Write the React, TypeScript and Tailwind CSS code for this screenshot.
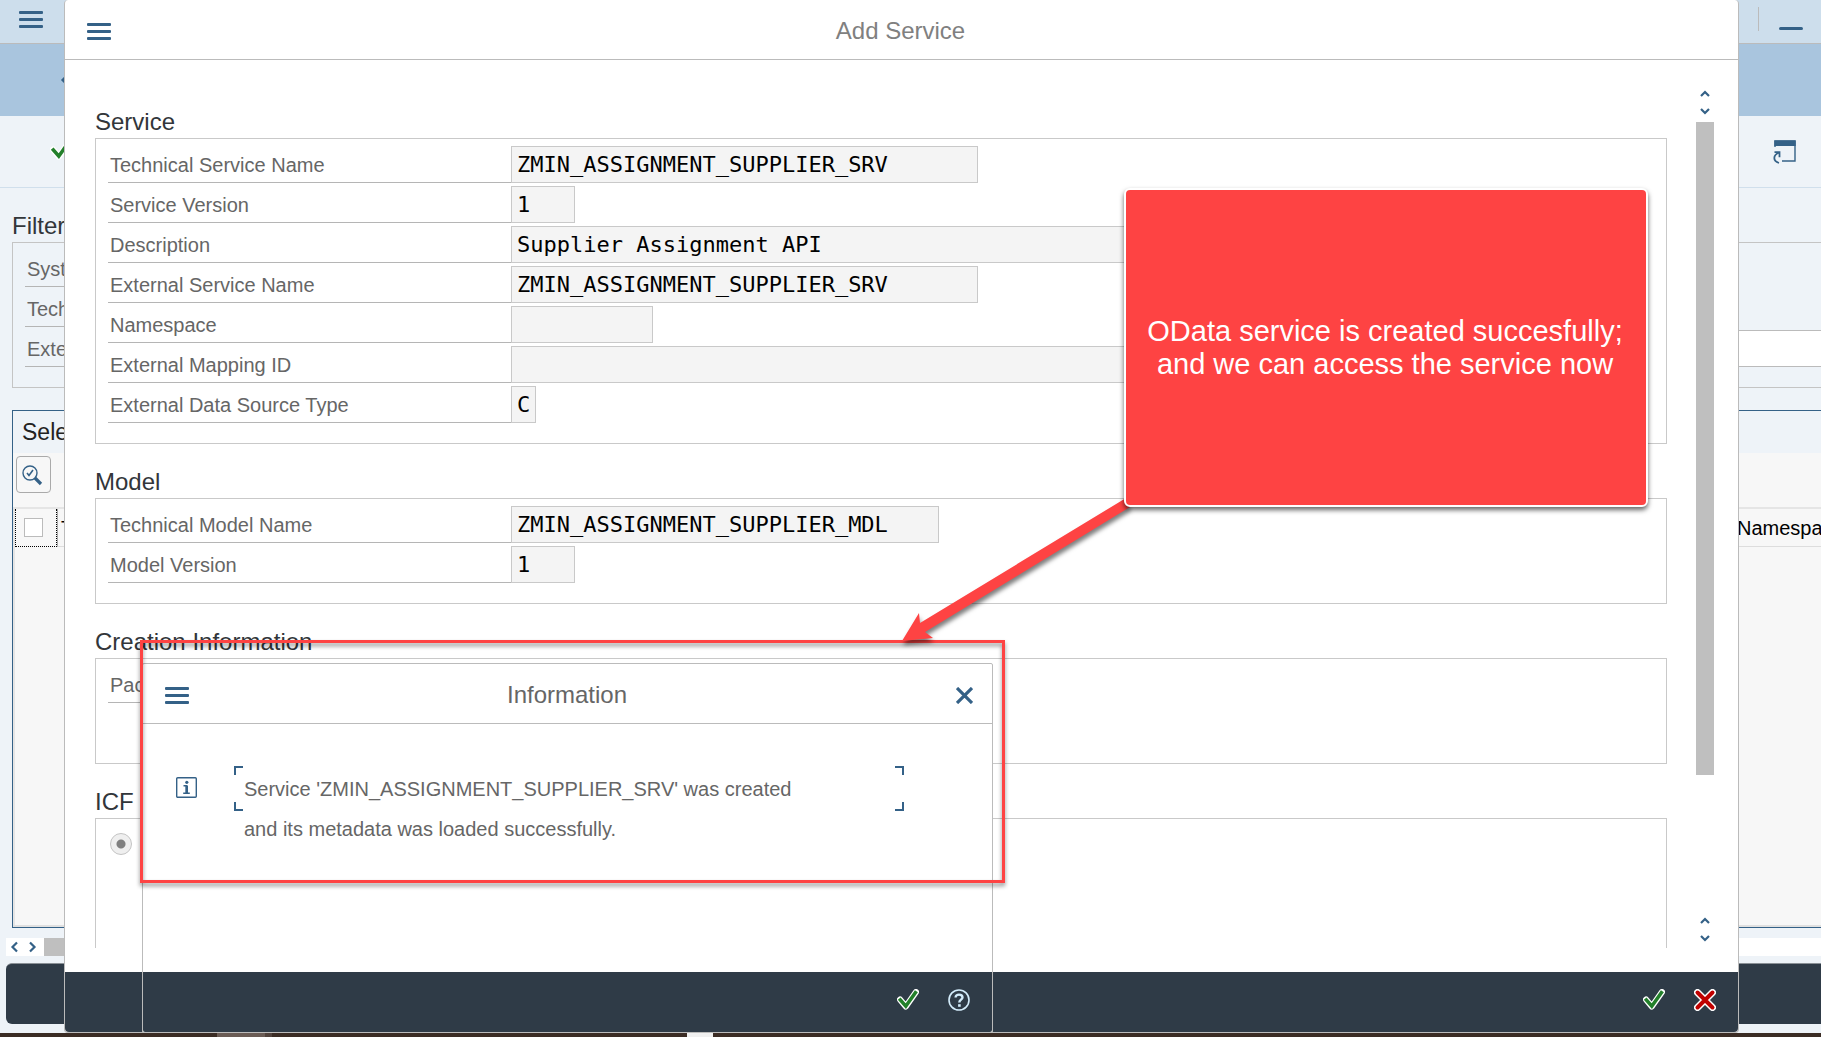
import React from "react";

type FieldSpec = { id: string; label: string; value?: string; width: string };

const serviceFields: FieldSpec[] = [
  { id: "tech-name", label: "Technical Service Name", value: "ZMIN_ASSIGNMENT_SUPPLIER_SRV", width: "w-[467px]" },
  { id: "version", label: "Service Version", value: "1", width: "w-16" },
  { id: "description", label: "Description", value: "Supplier Assignment API", width: "w-[800px]" },
  { id: "ext-name", label: "External Service Name", value: "ZMIN_ASSIGNMENT_SUPPLIER_SRV", width: "w-[467px]" },
  { id: "namespace", label: "Namespace", value: "", width: "w-[142px]" },
  { id: "mapping", label: "External Mapping ID", value: "", width: "w-[800px]" },
  { id: "source-type", label: "External Data Source Type", value: "C", width: "w-[25px]" },
];

const modelFields: FieldSpec[] = [
  { id: "model-name", label: "Technical Model Name", value: "ZMIN_ASSIGNMENT_SUPPLIER_MDL", width: "w-[428px]" },
  { id: "model-version", label: "Model Version", value: "1", width: "w-16" },
];

function MenuIcon() {
  return (
    <svg width="24" height="18" viewBox="0 0 24 18" fill="#346187" aria-hidden="true">
      <rect x="0" y="0" width="24" height="3" rx="1" />
      <rect x="0" y="7" width="24" height="3" rx="1" />
      <rect x="0" y="14" width="24" height="3" rx="1" />
    </svg>
  );
}

function CheckIcon() {
  return (
    <svg width="22" height="22" viewBox="0 0 22 22" fill="none" aria-hidden="true">
      <path d="M3 10.5 8.8 17.5 19 3" stroke="#fff" strokeWidth="6" strokeLinecap="round" strokeLinejoin="round" />
      <path d="M2.2 9.6 8.8 17.2 19.4 2.2" stroke="#23802b" strokeWidth="3.6" />
    </svg>
  );
}

function CancelIcon() {
  return (
    <svg width="22" height="22" viewBox="0 0 22 22" fill="none" aria-hidden="true">
      <path d="M3.5 3.5 18.5 18.5M18.5 3.5 3.5 18.5" stroke="#fff" strokeWidth="7" strokeLinecap="round" />
      <path d="M3.5 3.5 18.5 18.5M18.5 3.5 3.5 18.5" stroke="#c00000" strokeWidth="4" strokeLinecap="round" />
    </svg>
  );
}

function HelpIcon() {
  return (
    <svg width="22" height="22" viewBox="0 0 22 22" fill="none" stroke="#d3ecfb" strokeWidth="2" aria-hidden="true">
      <circle cx="11" cy="11" r="10" strokeWidth="1.6" />
      <path d="M7.6 8.6C7.6 6.6 9 5.6 11 5.6s3.5 1 3.5 2.8c0 2.2-3.2 2.4-3.2 5" strokeWidth="2.4" />
      <path d="M10.1 16.5h2.6" strokeWidth="2.6" />
    </svg>
  );
}

function Chevron({ dir }: { dir: "up" | "down" | "left" | "right" }) {
  const paths = {
    up: "M2 8 6 4 10 8",
    down: "M2 4 6 8 10 4",
    left: "M8 1.5 3.5 6 8 10.5",
    right: "M4 1.5 8.5 6 4 10.5",
  };
  return (
    <svg width="12" height="12" viewBox="0 0 12 12" fill="none" stroke="#346187" strokeWidth="2.2" aria-hidden="true">
      <path d={paths[dir]} />
    </svg>
  );
}

function Label({ htmlFor, children }: { htmlFor: string; children: React.ReactNode }) {
  return (
    <label
      htmlFor={htmlFor}
      className="flex w-[403px] shrink-0 items-center whitespace-nowrap border-b border-[#b5b5b5] pl-0.5 pt-0.5 text-[#666]"
    >
      {children}
    </label>
  );
}

function FieldRow({ field }: { field: FieldSpec }) {
  return (
    <div className="mb-[3px] flex h-[37px]">
      <Label htmlFor={field.id}>{field.label}</Label>
      {field.value !== undefined && (
        <input
          id={field.id}
          readOnly
          defaultValue={field.value}
          className={`border border-[#c9c9c9] bg-[#f4f4f4] pl-[5px] pt-px font-['DejaVu_Sans_Mono',monospace] text-[22px] text-black outline-none ${field.width}`}
        />
      )}
    </div>
  );
}

function Group({ title, open, children }: { title: string; open?: boolean; children: React.ReactNode }) {
  return (
    <section className={open ? "flex flex-1 flex-col" : "mb-5"}>
      <h2 className="h-[34px] text-2xl leading-[36px] text-[#32363a]">{title}</h2>
      <div
        className={
          open
            ? "flex-1 border border-b-0 border-[#c9c9c9] pl-3 pt-[7px]"
            : "border border-[#c9c9c9] pb-[17px] pl-3 pt-[7px]"
        }
      >
        {children}
      </div>
    </section>
  );
}

function Backdrop() {
  return (
    <div className="flex min-h-screen flex-col bg-[#eef3f8]">
      <header className="flex h-11 items-center justify-between border-b border-[#bbb] bg-[#cddeec] pl-[19px] pr-[18px]">
        <button aria-label="Menu" className="mb-1">
          <MenuIcon />
        </button>
        <div className="mb-[5px] flex h-6 items-end border-l border-[#bbb] pb-px pl-5">
          <button aria-label="Minimize" className="h-[3px] w-6 rounded-sm bg-[#346187]" />
        </div>
      </header>
      <div className="flex h-[72px] items-center bg-[#a9c5de] pl-[59px]">
        <button aria-label="Back">
          <Chevron dir="left" />
        </button>
      </div>
      <div className="flex h-[72px] items-center justify-between border-b border-[#d0dfec] pl-[50px] pr-6">
        <button aria-label="Continue" className="mb-1">
          <CheckIcon />
        </button>
        <button aria-label="New window">
          <svg width="24" height="24" viewBox="0 0 24 24" fill="none" aria-hidden="true">
            <path d="M2 7V1h20v20H9" stroke="#346187" strokeWidth="1.4" />
            <path d="M1.300 0.500H22.700v5.500H1.300z" fill="#346187" />
            <path d="M6 23C-.5 21 0 15 6 12.500M1.500 12.200h5v5" stroke="#346187" strokeWidth="1.800" />
          </svg>
        </button>
      </div>

      <section className="pl-3 pt-5">
        <h2 className="h-[34px] text-2xl leading-[36px] text-[#32363a]">Filter</h2>
        <div className="border border-r-0 border-[#c4c4c4] pb-[17px] pl-3 pt-[7px]">
          <div className="mb-[3px] flex h-[37px]">
            <Label htmlFor="alias">System</Label>
          </div>
          <div className="mb-[3px] flex h-[37px]">
            <Label htmlFor="filter-name">Tech.</Label>
          </div>
          <div className="mb-[3px] flex h-[37px]">
            <Label htmlFor="filter-ext">Extern</Label>
            <input id="filter-ext" className="min-w-0 flex-1 border-y border-[#bbb] bg-white outline-none" />
          </div>
        </div>
      </section>

      <section className="ml-3 mt-[22px] flex flex-1 flex-col border border-r-0 border-[#346187]">
        <h2 className="h-[42px] pl-[9px] text-[23px] leading-[42px] text-[#222]">Select</h2>
        <div className="flex flex-1 flex-col border-b-2 border-[#e0e0e0] bg-[#f7f7f7]">
          <div className="h-14 border-b-2 border-[#e5e5e5] pl-[3px] pt-[3px]">
            <button
              aria-label="Details"
              className="flex h-[37px] w-[35px] items-center justify-center rounded-sm border border-[#aaa] pr-1"
            >
              <svg width="22" height="22" viewBox="0 0 22 22" fill="none" stroke="#346187" aria-hidden="true">
                <circle cx="9" cy="9" r="7" strokeWidth="1.4" />
                <path d="m6 9 2 2.500L12 6" strokeWidth="1.600" />
                <path d="m14 14 6 6" strokeWidth="3.200" />
              </svg>
            </button>
          </div>
          <div className="flex flex-1 items-start border-l-2 border-[#e5e5e5]">
            <div className="flex h-[38px] w-[42px] shrink-0 items-center justify-center border border-t-0 border-dotted border-black pr-1.5">
              <input
                type="checkbox"
                aria-label="Select all"
                className="size-[19px] appearance-none border border-[#bbb] bg-white"
              />
            </div>
            <table className="h-[38px] w-full border-separate border-spacing-0 text-black">
              <thead>
                <tr>
                  <th className="border-b border-l border-b-[#ddd] border-l-[#aaa] p-0 pl-[3px] text-left font-normal">
                    T
                  </th>
                  <th className="w-[84px] border-b border-[#ddd] p-0 text-left font-normal">
                    <div className="w-[84px] overflow-hidden">Namespace</div>
                  </th>
                </tr>
              </thead>
            </table>
          </div>
        </div>
      </section>

      <div className="ml-1.5 mt-2.5 flex h-[18px] items-center bg-white">
        <button aria-label="Scroll left" className="ml-[3px] w-[17px]">
          <Chevron dir="left" />
        </button>
        <button aria-label="Scroll right" className="w-[18px]">
          <Chevron dir="right" />
        </button>
        <div className="h-full w-1/2 bg-[#bfbfbf]" />
      </div>
      <div className="mb-[9px] ml-1.5 mt-[7px] h-[61px] rounded-l-md border-t border-[#8a9096] bg-[#2f3b47]" />
      <div className="flex h-1 bg-[#3b2c24]">
        <div className="ml-[217px] w-12 bg-[#6b5c55]" />
        <div className="w-[7px] bg-[#51423c]" />
        <div className="ml-[415px] w-[26px] bg-[#f0f0f0]" />
      </div>
    </div>
  );
}

function AddServiceDialog() {
  return (
    <div
      role="dialog"
      aria-label="Add Service"
      className="absolute bottom-1 left-16 right-[82px] top-0 flex flex-col rounded-sm border border-t-0 border-[#bbb] bg-white"
    >
      <header className="flex h-[60px] shrink-0 items-center border-b border-[#bbb] px-[22px]">
        <button aria-label="Menu" className="mt-1">
          <MenuIcon />
        </button>
        <h1 className="flex-1 pr-[26px] pt-0.5 text-center text-2xl text-[#808080]">Add Service</h1>
      </header>
      <div className="flex min-h-0 flex-1 pb-6 pl-[30px] pr-6">
        <div className="flex min-h-0 min-w-0 flex-1 flex-col overflow-hidden pt-11">
          <Group title="Service">
            {serviceFields.map((f) => (
              <FieldRow key={f.id} field={f} />
            ))}
          </Group>
          <Group title="Model">
            {modelFields.map((f) => (
              <FieldRow key={f.id} field={f} />
            ))}
          </Group>
          <Group title="Creation Information">
            <FieldRow field={{ id: "package", label: "Package", width: "" }} />
            <div className="h-10" />
          </Group>
          <Group title="ICF Node" open>
            <div className="flex h-[36px] items-center pl-0.5">
              <input
                type="radio"
                defaultChecked
                aria-label="Standard Mode"
                className="size-[22px] appearance-none rounded-full border border-[#c4c4c4] bg-[#efefef] bg-[radial-gradient(circle,#808080_0_4px,transparent_5px)]"
              />
            </div>
          </Group>
        </div>
        <div className="ml-[29px] flex w-[18px] flex-col items-center">
          <button aria-label="Scroll up" className="mt-[25px] h-[17px]">
            <Chevron dir="up" />
          </button>
          <button aria-label="Scroll down" className="mb-0.5 h-[18px]">
            <Chevron dir="down" />
          </button>
          <div className="w-full flex-1 bg-[#bfbfbf]" />
          <button aria-label="Page up" className="mt-[137px] h-[17px]">
            <Chevron dir="up" />
          </button>
          <button aria-label="Page down" className="mb-0.5 h-[17px]">
            <Chevron dir="down" />
          </button>
        </div>
      </div>
      <footer className="flex h-[60px] shrink-0 items-center justify-end gap-[29px] rounded-b-sm bg-[#2f3b47] pb-[5px] pr-[22px]">
        <button aria-label="OK">
          <CheckIcon />
        </button>
        <button aria-label="Cancel">
          <CancelIcon />
        </button>
      </footer>
    </div>
  );
}

function InformationDialog() {
  return (
    <div
      role="dialog"
      aria-label="Information"
      className="absolute bottom-1 left-[142px] top-[663px] flex w-[851px] flex-col rounded-xs border border-[#bbb] bg-white"
    >
      <header className="flex h-[60px] shrink-0 items-center border-b border-[#bbb] pl-[22px] pr-[19px]">
        <button aria-label="Menu" className="mt-1">
          <MenuIcon />
        </button>
        <h2 className="flex-1 pr-[11px] pt-0.5 text-center text-2xl text-[#666]">Information</h2>
        <button aria-label="Close" className="mt-1">
          <svg width="17" height="17" viewBox="0 0 17 17" stroke="#346187" strokeWidth="3.200" aria-hidden="true">
            <path d="M1 1 16 16M16 1 1 16" />
          </svg>
        </button>
      </header>
      <div className="flex flex-1 pl-[33px] pr-[88px] pt-[42px]">
        <svg className="mt-[11px] shrink-0" width="21" height="21" viewBox="0 0 21 21" fill="none" aria-hidden="true">
          <rect x=".7" y=".7" width="19.600" height="19.600" rx="1" stroke="#346187" strokeWidth="1.400" />
          <path d="M7.500 8.800h2.800v7.400M7.200 16.200h6.600M10.500 8.400v7.800" stroke="#346187" strokeWidth="1.500" />
          <path d="M10.800 8.500v7.500" stroke="#346187" strokeWidth="2.400" />
          <circle cx="10.800" cy="5.300" r="1.600" fill="#346187" />
        </svg>
        <div className="relative ml-[37px] h-[45px] flex-1 pl-2.5 pt-[3px]">
          <span className="absolute left-0 top-0 size-[9px] border-l-2 border-t-2 border-[#346187]" />
          <span className="absolute right-0 top-0 size-[9px] border-r-2 border-t-2 border-[#346187]" />
          <span className="absolute bottom-0 left-0 size-[9px] border-b-2 border-l-2 border-[#346187]" />
          <span className="absolute bottom-0 right-0 size-[9px] border-b-2 border-r-2 border-[#346187]" />
          <p className="whitespace-nowrap leading-10 text-[#666]">
            Service 'ZMIN_ASSIGNMENT_SUPPLIER_SRV' was created
            <br />
            and its metadata was loaded successfully.
          </p>
        </div>
      </div>
      <footer className="flex h-[60px] shrink-0 items-center justify-end gap-[29px] rounded-b-xs bg-[#2f3b47] pb-[5px] pr-[22px]">
        <button aria-label="OK">
          <CheckIcon />
        </button>
        <button aria-label="Help">
          <HelpIcon />
        </button>
      </footer>
    </div>
  );
}

function Annotations() {
  return (
    <>
      <div className="pointer-events-none absolute left-[140px] top-[640px] h-[243px] w-[865px] border-[3px] border-[#fe4343] drop-shadow-[0_3px_2px_rgba(0,0,0,0.45)]" />
      <svg
        className="pointer-events-none absolute left-[890px] top-[490px] drop-shadow-[1px_4px_2px_rgba(0,0,0,0.5)]"
        width="260"
        height="160"
        viewBox="0 0 260 160"
        aria-hidden="true"
      >
        <path d="M236 8 30 133 29 123 12 151 43 148 35 142 240 17z" fill="#fe4343" />
      </svg>
      <div className="absolute left-[1124px] top-[188px] flex h-[319px] w-[524px] items-center justify-center rounded-md border-2 border-white bg-[#fe4343] shadow-[0_3px_5px_rgba(0,0,0,0.6)]">
        <p className="whitespace-nowrap pr-0.5 text-center text-[29px] leading-[33px] text-white">
          OData service is created succesfully;
          <br />
          and we can access the service now
        </p>
      </div>
    </>
  );
}

export default function App() {
  return (
    <main className="relative min-h-screen overflow-hidden font-['Liberation_Sans',sans-serif] text-xl">
      <Backdrop />
      <AddServiceDialog />
      <InformationDialog />
      <Annotations />
    </main>
  );
}
